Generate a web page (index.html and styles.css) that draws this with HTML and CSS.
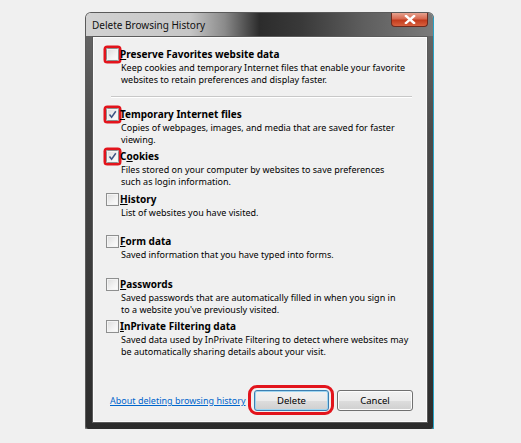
FILE: index.html
```html
<!DOCTYPE html>
<html>
<head>
<meta charset="utf-8">
<link rel="stylesheet" href="styles.css">
</head>
<body>
<div class="window">
  <div class="titlebar">
    <span class="title">Delete Browsing History</span>
    <span class="close"><svg width="12" height="9" viewBox="0 0 12 9"><path d="M2 1 L10 8 M10 1 L2 8" stroke="#fff" stroke-width="2.4" stroke-linecap="square"/></svg></span>
  </div>
  <div class="client">
    <div class="item first">
      <span class="cb hl"></span>
      <div class="text">
        <div class="label"><u>P</u>reserve Favorites website data</div>
        <div class="desc">Keep cookies and temporary Internet files that enable your favorite<br>websites to retain preferences and display faster.</div>
      </div>
    </div>
    <div class="sep"></div>
    <div class="list">
      <div class="item">
        <span class="cb hl checked"><svg width="9" height="9" viewBox="0 0 9 9"><path d="M1.5 4.5 L3.6 7.2 L7.8 1.2" fill="none" stroke="#3f5584" stroke-width="1.5"/></svg></span>
        <div class="text">
          <div class="label"><u>T</u>emporary Internet files</div>
          <div class="desc">Copies of webpages, images, and media that are saved for faster<br>viewing.</div>
        </div>
      </div>
      <div class="item">
        <span class="cb hl checked"><svg width="9" height="9" viewBox="0 0 9 9"><path d="M1.5 4.5 L3.6 7.2 L7.8 1.2" fill="none" stroke="#3f5584" stroke-width="1.5"/></svg></span>
        <div class="text">
          <div class="label">C<u>o</u>okies</div>
          <div class="desc">Files stored on your computer by websites to save preferences<br>such as login information.</div>
        </div>
      </div>
      <div class="item">
        <span class="cb"></span>
        <div class="text">
          <div class="label"><u>H</u>istory</div>
          <div class="desc">List of websites you have visited.</div>
        </div>
      </div>
      <div class="item">
        <span class="cb"></span>
        <div class="text">
          <div class="label"><u>F</u>orm data</div>
          <div class="desc">Saved information that you have typed into forms.</div>
        </div>
      </div>
      <div class="item">
        <span class="cb"></span>
        <div class="text">
          <div class="label"><u>P</u>asswords</div>
          <div class="desc">Saved passwords that are automatically filled in when you sign in<br>to a website you've previously visited.</div>
        </div>
      </div>
      <div class="item">
        <span class="cb"></span>
        <div class="text">
          <div class="label"><u>I</u>nPrivate Filtering data</div>
          <div class="desc">Saved data used by InPrivate Filtering to detect where websites may<br>be automatically sharing details about your visit.</div>
        </div>
      </div>
    </div>
    <div class="footer">
      <a class="link" href="#">About deleting browsing history</a>
      <button class="btn default">Delete</button>
      <button class="btn">Cancel</button>
    </div>
  </div>
</div>
</body>
</html>
```

FILE: styles.css
```css
html, body {
  margin: 0;
  padding: 0;
  background: #f0f0f0;
}
body {
  font-family: "Noto Sans", "Open Sans", sans-serif;
  font-size: 9px;
  color: #000;
}
.window {
  margin: 13px 0 0 86px;
  width: 347px;
  height: 416px;
  box-sizing: border-box;
  border-radius: 5px 5px 2px 2px;
  padding: 0 5px 6px 6px;
  display: flex;
  flex-direction: column;
  background:
    linear-gradient(to right, #d2d2d2 0%, #c6c6c6 30%, #8a8a8a 40%, #2c2c2c 50%, #393939 62%, #5e5e5e 80%, #7b7b7b 100%) top / 100% 23px no-repeat,
    linear-gradient(to bottom, #6a6a6a 0px, #4a4a4a 120px, #2c2c2c 100%);
  box-shadow: 1px 1px 0 #27a3c6, 0 0 0 1px #5a5a5a;
}
.titlebar {
  height: 23px;
  display: flex;
  justify-content: space-between;
  align-items: flex-start;
  flex: none;
}
.title {
  font-size: 10px;
  color: #111;
  padding-top: 5px;
  line-height: 14px;
}
.close {
  width: 37px;
  height: 14px;
  border: 1px solid #6e2a1e;
  border-top: none;
  box-sizing: border-box;
  border-radius: 0 0 4px 4px;
  background: linear-gradient(to bottom, #e6a28f 0%, #d7684f 45%, #c23b1d 55%, #d8613f 100%);
  display: flex;
  align-items: center;
  justify-content: center;
}
.client {
  flex: 1;
  background: #f0f0f0;
  border: 1px solid #5b5b5b;
  box-shadow: inset 0 0 0 1px #fbfbfb;
  padding: 10px 14px 11px 13px;
  display: flex;
  flex-direction: column;
}
.item {
  display: flex;
  gap: 1px;
  height: 42.4px;
}
.item.first {
  height: auto;
}
.cb {
  flex: none;
  width: 13px;
  height: 13px;
  box-sizing: border-box;
  border: 1px solid #8e8f8f;
  background: linear-gradient(135deg, #dcdcdc 0%, #f3f3f3 60%, #fdfdfd 100%);
  box-shadow: inset 0 0 0 1px #f4f4f4;
  margin-top: 1px;
  display: flex;
  align-items: center;
  justify-content: center;
}
.cb.hl {
  box-shadow: inset 0 0 0 1px #f4f4f4, 0 0 0 2.5px #e2141c;
  border-radius: 1.5px;
}
.text {
  flex: 1;
}
.label {
  font-weight: bold;
  font-size: 10px;
  line-height: 15px;
}
.desc {
  line-height: 12px;
  padding-left: 1px;
  white-space: nowrap;
}
.sep {
  height: 1px;
  background: #c8c8c8;
  border-bottom: 1px solid #fff;
  margin: 10px 1px 9px 5px;
}
.footer {
  margin-top: auto;
  display: flex;
  align-items: center;
}
.link {
  color: #0066cc;
  text-decoration: underline;
  margin-left: 4px;
  margin-right: auto;
  font-size: 9px;
}
.btn {
  font-family: inherit;
  font-size: 9.5px;
  height: 21px;
  width: 75px;
  border: 1px solid #707070;
  border-radius: 3px;
  background: linear-gradient(to bottom, #f2f2f2 0%, #ebebeb 50%, #dddddd 51%, #cfcfcf 100%);
  box-shadow: inset 0 0 0 1px #fcfcfc;
  color: #000;
  padding: 0;
  position: relative;
}
.btn + .btn {
  margin-left: 8px;
  width: 76px;
}
.btn.default {
  border-color: #3c7fb1;
  box-shadow: inset 0 0 0 1px #9ed5f1;
}
.btn.default::after {
  content: "";
  position: absolute;
  left: -7px;
  right: -6px;
  top: -6px;
  bottom: -5px;
  border: 3px solid #e2141c;
  border-radius: 9px;
}
```
